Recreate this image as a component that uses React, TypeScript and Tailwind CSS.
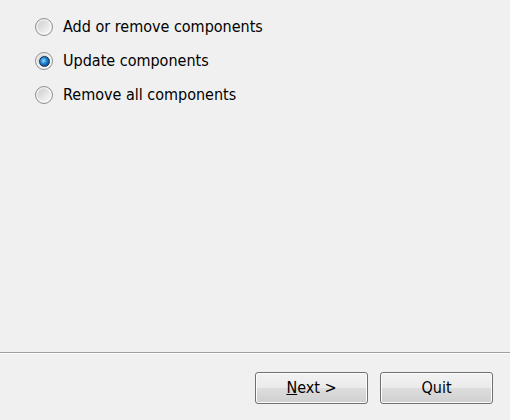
import React from 'react';

interface RadioOptionProps {
  label: string;
  checked?: boolean;
}

const RadioOption: React.FC<RadioOptionProps> = ({ label, checked }) => {
  return (
    <div className="flex items-center h-[34px] gap-[10px]">
      {/* Radio circle */}
      <div className="w-[18px] h-[18px] rounded-full border border-[#8f8f8f] bg-gradient-to-br from-[#d4d4d4] via-[#eeeeee] to-[#ffffff] flex items-center justify-center shadow-[inset_0_0_0_1px_#f4f4f4]">
        <div className="w-[12px] h-[12px] rounded-full bg-gradient-to-br from-[#cfcfcf] to-[#f8f8f8] flex items-center justify-center">
          {checked && (
            <div className="w-[11px] h-[11px] rounded-full bg-[radial-gradient(circle_at_40%_40%,#8fdcff_0%,#1a7ccc_45%,#0b2f5c_100%)] border border-[#0f2e52]"></div>
          )}
        </div>
      </div>
      <span className="text-[16px] leading-[20px] text-black">{label}</span>
    </div>
  );
};

const DialogButton: React.FC<{ children: React.ReactNode }> = ({ children }) => {
  return (
    <button className="w-[113px] h-[32px] rounded-[3px] border border-[#707070] bg-[linear-gradient(to_bottom,#f2f2f2_0%,#ebebeb_50%,#dddddd_50%,#cfcfcf_100%)] shadow-[inset_0_0_0_1px_#fcfcfc] text-[16px] leading-[20px] text-black flex items-center justify-center">
      {children}
    </button>
  );
};

export default function App() {
  return (
    <div
      className="w-[510px] h-[420px] bg-[#f0f0f0] flex flex-col"
      style={{ fontFamily: 'Tahoma, "DejaVu Sans Condensed", "DejaVu Sans", sans-serif' }}
    >
      {/* Options */}
      <div className="flex-1 pt-[10px] pl-[35px]">
        <RadioOption label="Add or remove components" />
        <RadioOption label="Update components" checked />
        <RadioOption label="Remove all components" />
      </div>

      {/* Separator */}
      <div className="border-t border-[#a0a0a0] border-b border-b-white"></div>

      {/* Footer */}
      <div className="h-[66px] flex justify-end gap-[12px] pt-[18px] pr-[17px]">
        <DialogButton>
          <span>
            <span className="underline">N</span>ext &gt;
          </span>
        </DialogButton>
        <DialogButton>Quit</DialogButton>
      </div>
    </div>
  );
}
